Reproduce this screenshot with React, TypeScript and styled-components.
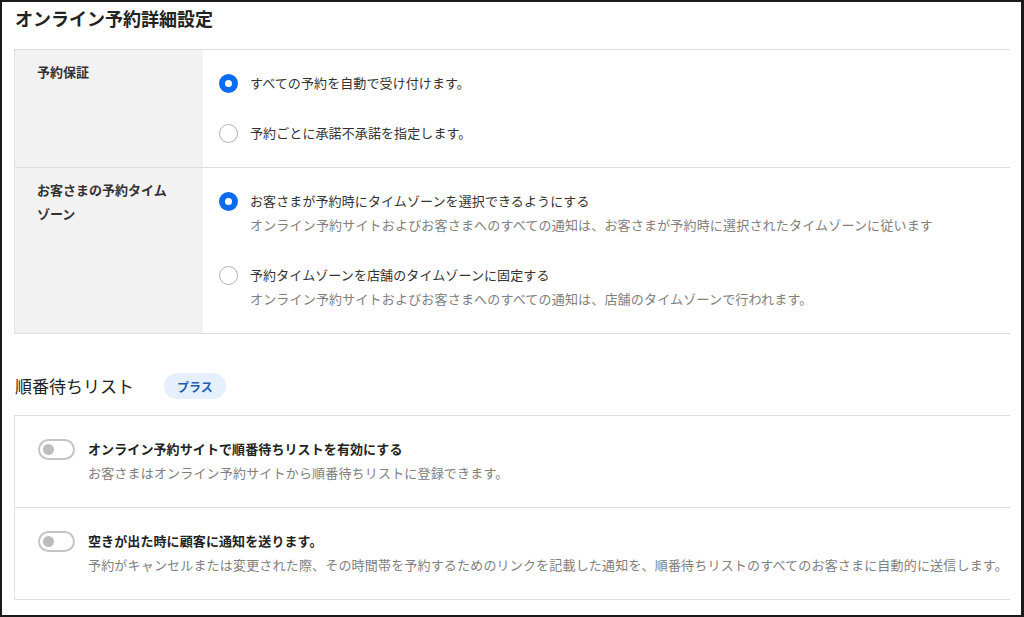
import * as React from 'react';
import styled, { createGlobalStyle } from 'styled-components';

const GlobalStyle = createGlobalStyle`
	html, body {
		margin: 0;
		padding: 0;
		background: #ffffff;
	}
	body {
		font-family: "Noto Sans CJK JP", "Noto Sans", "Liberation Sans", sans-serif;
		color: #333333;
	}
	* {
		box-sizing: border-box;
	}
`;

interface RadioOption {
	label: string;
	description?: string;
	checked?: boolean;
}

interface SettingRow {
	title: string;
	options: RadioOption[];
}

const settings: SettingRow[] = [
	{
		title: '予約保証',
		options: [
			{ label: 'すべての予約を自動で受け付けます。', checked: true },
			{ label: '予約ごとに承諾不承諾を指定します。' },
		],
	},
	{
		title: 'お客さまの予約タイムゾーン',
		options: [
			{
				label: 'お客さまが予約時にタイムゾーンを選択できるようにする',
				description: 'オンライン予約サイトおよびお客さまへのすべての通知は、お客さまが予約時に選択されたタイムゾーンに従います',
				checked: true,
			},
			{
				label: '予約タイムゾーンを店舗のタイムゾーンに固定する',
				description: 'オンライン予約サイトおよびお客さまへのすべての通知は、店舗のタイムゾーンで行われます。',
			},
		],
	},
];

const waitlist = [
	{
		title: 'オンライン予約サイトで順番待ちリストを有効にする',
		description: 'お客さまはオンライン予約サイトから順番待ちリストに登録できます。',
	},
	{
		title: '空きが出た時に顧客に通知を送ります。',
		description: '予約がキャンセルまたは変更された際、その時間帯を予約するためのリンクを記載した通知を、順番待ちリストのすべてのお客さまに自動的に送信します。',
	},
];

export default function App() {
	return (
		<>
			<GlobalStyle />
			<Frame>
				<PageTitle>オンライン予約詳細設定</PageTitle>
				<Table>
					{settings.map((row) => (
						<Row key={row.title}>
							<LabelCell>{row.title}</LabelCell>
							<OptionsCell>
								{row.options.map((option) => (
									<Option key={option.label}>
										<Radio checked={!!option.checked} />
										<OptionText>
											<OptionLabel>{option.label}</OptionLabel>
											{option.description && <Description>{option.description}</Description>}
										</OptionText>
									</Option>
								))}
							</OptionsCell>
						</Row>
					))}
				</Table>

				<SectionHeader>
					<SectionTitle>順番待ちリスト</SectionTitle>
					<Badge>プラス</Badge>
				</SectionHeader>

				<Card>
					{waitlist.map((item) => (
						<ToggleRow key={item.title}>
							<Toggle />
							<OptionText>
								<ToggleTitle>{item.title}</ToggleTitle>
								<Description>{item.description}</Description>
							</OptionText>
						</ToggleRow>
					))}
				</Card>
			</Frame>
		</>
	);
}

const Frame = styled.div`
	width: 1024px;
	height: 617px;
	border: 2px solid #1a1a1a;
	border-right-width: 3px;
	padding: 0 11px 0 12px;
	overflow: hidden;
`;

const PageTitle = styled.h1`
	margin: 0;
	padding: 4px 0 0 1px;
	height: 47px;
	font-size: 18px;
	line-height: 24px;
	font-weight: 700;
	color: #222222;
`;

const Table = styled.div`
	border-top: 1px solid #dddddd;
	border-left: 1px solid #e2e2e2;
`;

const Row = styled.div`
	display: grid;
	grid-template-columns: 188px 1fr;
	border-bottom: 1px solid #dddddd;
`;

const LabelCell = styled.div`
	background: #f2f2f2;
	padding: 10px 30px 10px 22px;
	font-size: 13px;
	line-height: 24px;
	font-weight: 700;
	color: #333333;
`;

const OptionsCell = styled.div`
	display: flex;
	flex-direction: column;
	gap: 30px;
	padding: 23px 0 24px 16px;
`;

const Option = styled.div`
	display: flex;
	align-items: flex-start;
	gap: 12px;
`;

const Radio = styled.span<{ checked: boolean }>`
	flex: none;
	width: 19px;
	height: 19px;
	margin-top: 1px;
	border-radius: 50%;
	border: ${(p) => (p.checked ? '6px solid #0b6cf0' : '1.5px solid #b0b0b0')};
	background: #ffffff;
`;

const OptionText = styled.div`
	display: flex;
	flex-direction: column;
	gap: 4px;
`;

const OptionLabel = styled.div`
	font-size: 13px;
	line-height: 20px;
	letter-spacing: 0.1px;
	color: #333333;
`;

const Description = styled.div`
	font-size: 13px;
	line-height: 20px;
	letter-spacing: 0.18px;
	color: #808080;
	white-space: nowrap;
`;

const SectionHeader = styled.div`
	display: flex;
	align-items: center;
	gap: 30px;
	margin-top: 39px;
	padding-left: 1px;
	height: 26px;
	margin-bottom: 16px;
`;

const SectionTitle = styled.h2`
	margin: 0;
	font-size: 17px;
	line-height: 24px;
	font-weight: 400;
	color: #222222;
`;

const Badge = styled.span`
	display: inline-flex;
	align-items: center;
	justify-content: center;
	width: 62px;
	height: 26px;
	border-radius: 13px;
	background: #e6f0fc;
	color: #1f5db8;
	font-size: 12px;
	font-weight: 700;
`;

const Card = styled.div`
	border-top: 1px solid #dddddd;
	border-left: 1px solid #e2e2e2;
`;

const ToggleRow = styled.div`
	display: flex;
	align-items: flex-start;
	gap: 13px;
	padding: 23px 0 24px 23px;
	border-bottom: 1px solid #dddddd;
`;

const Toggle = styled.span`
	position: relative;
	flex: none;
	width: 37px;
	height: 21px;
	border-radius: 11px;
	border: 2px solid #c4c4c4;
	background: #ffffff;

	&::after {
		content: '';
		position: absolute;
		left: 3px;
		top: 3px;
		width: 11px;
		height: 11px;
		border-radius: 50%;
		background: #bdbdbd;
	}
`;

const ToggleTitle = styled.div`
	font-size: 13px;
	line-height: 20px;
	letter-spacing: 0.1px;
	font-weight: 700;
	color: #222222;
`;
